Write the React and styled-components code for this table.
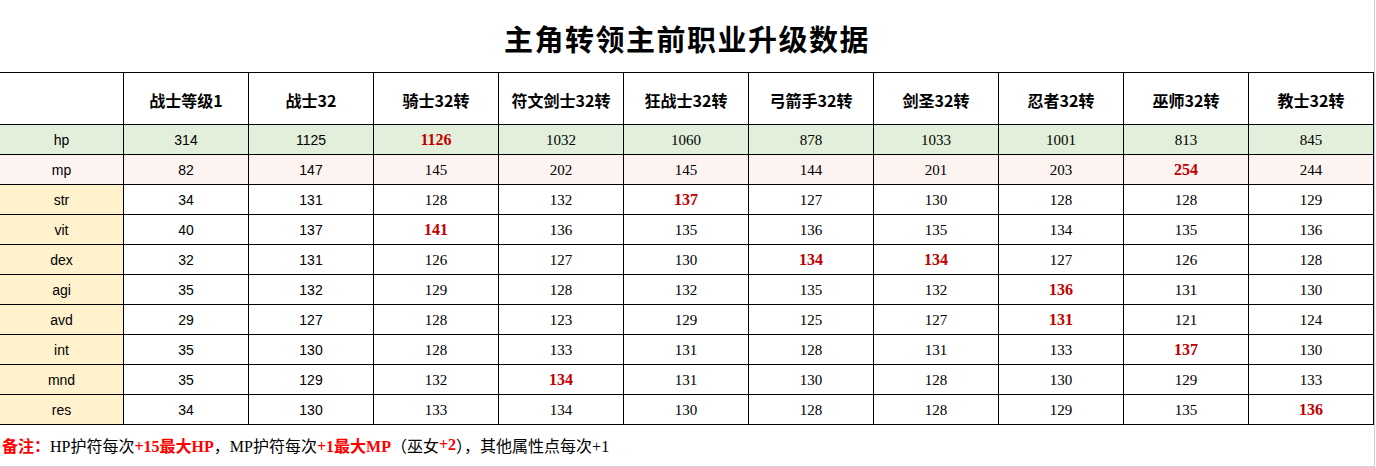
import React from 'react';
import styled, { createGlobalStyle } from 'styled-components';

const GlobalStyle = createGlobalStyle`
  html, body {
    margin: 0;
    padding: 0;
    background: #ffffff;
  }
`;

const columns = ['战士等级1', '战士32', '骑士32转', '符文剑士32转', '狂战士32转', '弓箭手32转', '剑圣32转', '忍者32转', '巫师32转', '教士32转'];

// value suffixed with * is highlighted
const rows = [
  { stat: 'hp', tone: 'hp', values: ['314', '1125', '1126*', '1032', '1060', '878', '1033', '1001', '813', '845'] },
  { stat: 'mp', tone: 'mp', values: ['82', '147', '145', '202', '145', '144', '201', '203', '254*', '244'] },
  { stat: 'str', values: ['34', '131', '128', '132', '137*', '127', '130', '128', '128', '129'] },
  { stat: 'vit', values: ['40', '137', '141*', '136', '135', '136', '135', '134', '135', '136'] },
  { stat: 'dex', values: ['32', '131', '126', '127', '130', '134*', '134*', '127', '126', '128'] },
  { stat: 'agi', values: ['35', '132', '129', '128', '132', '135', '132', '136*', '131', '130'] },
  { stat: 'avd', values: ['29', '127', '128', '123', '129', '125', '127', '131*', '121', '124'] },
  { stat: 'int', values: ['35', '130', '128', '133', '131', '128', '131', '133', '137*', '130'] },
  { stat: 'mnd', values: ['35', '129', '132', '134*', '131', '130', '128', '130', '129', '133'] },
  { stat: 'res', values: ['34', '130', '133', '134', '130', '128', '128', '129', '135', '136*'] },
];

const rowBg = { hp: '#e2efda', mp: '#fdf3f0' };

const Sheet = styled.div`
  box-sizing: border-box;
  width: 1375px;
  height: 467px;
  border-right: 1px solid #c9cfdf;
  border-bottom: 1px solid #c9cfdf;
  display: flex;
  flex-direction: column;
`;

const Title = styled.h1`
  margin: 0;
  height: 72px;
  display: flex;
  align-items: center;
  justify-content: center;
  padding-top: 4px;
  box-sizing: border-box;
  font-family: "Noto Sans CJK SC", sans-serif;
  font-weight: 700;
  font-size: 29px;
  letter-spacing: 1.5px;
  color: #000;
`;

const Grid = styled.div`
  display: grid;
  grid-template-columns: 124px repeat(10, 125px);
  grid-template-rows: 52px repeat(10, 30px);
  border-top: 1px solid #000;
`;

const Cell = styled.div`
  box-sizing: border-box;
  border-right: 1px solid #000;
  border-bottom: 1px solid #000;
  display: flex;
  align-items: center;
  justify-content: center;
  background: ${(p) => p.$bg || '#ffffff'};
  color: #000;
  white-space: nowrap;
`;

const HeadCell = styled(Cell)`
  font-family: "Noto Sans CJK SC", sans-serif;
  font-weight: 700;
  font-size: 16px;
  padding-top: 2px;
`;

const LabelCell = styled(Cell)`
  background: ${(p) => p.$bg || '#fff2cc'};
  font-family: "Liberation Sans", "Noto Sans", sans-serif;
  font-size: 14px;
`;

const ValueCell = styled(Cell)`
  padding-top: 1px;
  font-family: ${(p) =>
    p.$sans && !p.$hot
      ? '"Liberation Sans", "Noto Sans", sans-serif'
      : '"Liberation Serif", serif'};
  font-size: ${(p) => (p.$hot ? '16px' : p.$sans ? '14px' : '15px')};
  font-weight: ${(p) => (p.$hot ? 700 : 400)};
  color: ${(p) => (p.$hot ? '#c00000' : '#000')};
`;

const Note = styled.p`
  margin: 0;
  flex: 1;
  display: flex;
  align-items: center;
  padding: 0 0 2px 2px;
  font-family: "Liberation Serif", "Noto Sans CJK SC", serif;
  font-size: 16px;
  color: #000;
  white-space: nowrap;
`;

const Mark = styled.b`
  color: #ff0000;
  font-weight: 700;
`;

export default function App() {
  return (
    <>
      <GlobalStyle />
      <Sheet>
        <Title>主角转领主前职业升级数据</Title>
        <Grid>
          <HeadCell />
          {columns.map((c) => (
            <HeadCell key={c}>{c}</HeadCell>
          ))}
          {rows.map((r) => (
            <React.Fragment key={r.stat}>
              <LabelCell $bg={rowBg[r.tone]}>{r.stat}</LabelCell>
              {r.values.map((v, i) => {
                const hot = v.endsWith('*');
                return (
                  <ValueCell key={i} $bg={rowBg[r.tone]} $hot={hot} $sans={i < 2}>
                    {hot ? v.slice(0, -1) : v}
                  </ValueCell>
                );
              })}
            </React.Fragment>
          ))}
        </Grid>
        <Note>
          <Mark>备注：</Mark>HP护符每次<Mark>+15最大HP</Mark>，MP护符每次<Mark>+1最大MP</Mark>（巫女<Mark>+2</Mark>），其他属性点每次+1
        </Note>
      </Sheet>
    </>
  );
}
